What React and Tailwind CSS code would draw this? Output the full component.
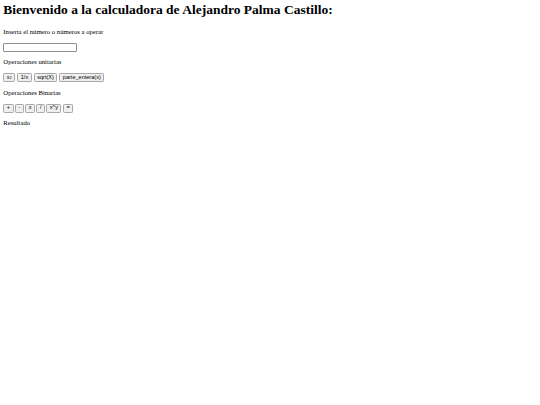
import React from 'react';

const Btn = ({ children }) => (
  <button className="h-[9px] px-[2.5px] bg-[#efefef] border-[0.8px] border-[#a8a8a8] rounded-[1.3px] text-[5.56px] leading-none text-black font-['Liberation_Sans',Arial,sans-serif]">
    {children}
  </button>
);

export default function App() {
  return (
    <div className="min-h-[405px] bg-white px-[3.33px] pt-[2px] text-black font-['Liberation_Serif','Times_New_Roman',serif]">
      <h1 className="text-[13.5px] font-bold leading-[15.33px]">
        Bienvenido a la calculadora de Alejandro Palma Castillo:
      </h1>

      <p className="mt-[10.6px] text-[6.7px] leading-[7.67px]">Inserta el número o números a operar</p>
      <div className="mt-[7.33px] flex">
        <input type="text" className="w-[74px] h-[9px] border-[0.8px] border-[#8f8f8f] rounded-[1px] bg-white" />
      </div>

      <p className="mt-[6.4px] text-[6.7px] leading-[7.67px]">Operaciones unitarias</p>
      <div className="mt-[7.33px] flex gap-[2px]">
        <Btn>
          x<sup className="text-[3.9px] leading-none relative -top-[0.5px]">2</sup>
        </Btn>
        <Btn>1/x</Btn>
        <Btn>sqrt(X)</Btn>
        <Btn>parte_entera(x)</Btn>
      </div>

      <p className="mt-[6.4px] text-[6.7px] leading-[7.67px]">Operaciones Binarias</p>
      <div className="mt-[7.33px] flex gap-[1.4px]">
        <Btn>+</Btn>
        <Btn>-</Btn>
        <Btn>x</Btn>
        <Btn>/</Btn>
        <Btn>x^y</Btn>
        <Btn>=</Btn>
      </div>

      <p className="mt-[6.4px] text-[6.7px] leading-[7.67px]">Resultado</p>
    </div>
  );
}
